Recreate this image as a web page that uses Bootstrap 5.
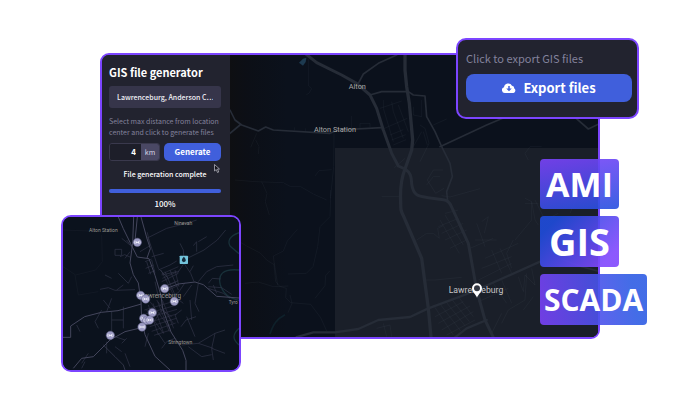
<!DOCTYPE html>
<html lang="en">
<head>
<meta charset="utf-8">
<meta name="viewport" content="width=device-width, initial-scale=1">
<title>GIS file generator</title>
<link rel="stylesheet" href="https://cdn.jsdelivr.net/npm/bootstrap@5.3.0/dist/css/bootstrap.min.css">
<style>
  :root { --edge: #7c45ff; --panel: #22232f; --blue: #405fdc; --muted-ink: #83829c; }
  body { background: #fff; font-family: "Noto Sans CJK SC", "Noto Sans", sans-serif; color: #fff; }
  .stage { padding: 53px 100px 60px; }
  .framed { border: 2px solid var(--edge); border-radius: 9px; background: var(--panel); }
  .map-clip { border-radius: 0 7px 7px 0; overflow: hidden; }
  .side { width: 128px; padding: 10px 9px 8px 7px; background: var(--panel); border-radius: 7px 0 0 7px; }
  .side-title { font-size: 11px; line-height: 15px; }
  .place-input { height: 22px; font-size: 7px; line-height: 12px; font-weight: 500; background: #36354a; color: #f0f0f6; border: 0; border-radius: 3px; margin-top: 6px; }
  .hint { font-size: 7px; line-height: 11px; color: var(--muted-ink); margin: 8px 0 5px; }
  .dist { height: 18px; width: 51px; border: 1px solid #3a394d; border-radius: 3px; overflow: hidden; }
  .dist input { background: #1d1e29; color: #fff; border: 0; font-size: 8px; font-weight: 700; min-width: 0; padding: 0 5px; }
  .dist label { width: 18px; background: #4a4864; color: #d8d7e8; font-size: 7px; }
  .blue-btn { background: var(--blue); color: #fff; font-weight: 700; border: 0; padding: 0; }
  .blue-btn:hover { background: #3652c6; color: #fff; }
  .generate { height: 18px; font-size: 8px; line-height: 12px; border-radius: 5px; }
  .status { font-size: 7px; line-height: 11px; font-weight: 500; margin: 8px 0 9px; }
  .done-bar { height: 4px; background: #36354a; border-radius: 2px; }
  .done-bar .progress-bar { background: var(--blue); }
  .percent { font-size: 8px; line-height: 12px; font-weight: 500; margin-top: 5px; }
  .pointer { right: 10px; top: 109px; width: 6px; height: 9px; }
  .main-map { width: 100%; aspect-ratio: 368 / 282; min-height: 282px; display: block; }
  .export-card { right: -41px; top: -17px; width: 183px; padding: 10px 5px 15px 8px; border-radius: 10px; }
  .export-card p { font-size: 11px; line-height: 16px; color: var(--muted-ink); margin-bottom: 8px; }
  .export-btn { height: 28px; font-size: 13px; line-height: 20px; border-radius: 8px; gap: 7px; }
  .tags { right: -49px; top: 104px; width: 107px; gap: 7px; }
  .tag { font-family: "Open Sans", "Noto Sans", sans-serif; font-weight: 700; border-radius: 4px; height: 51px; width: 79px; }
  .tag-ami { height: 50px; font-size: 34px; background: linear-gradient(170deg, #7b43fae6, #2650dfe6); }
  .tag-gis { font-size: 38px; background: linear-gradient(135deg, #1f4cdde6 15%, #8047fde6 85%); }
  .tag-scada { width: 107px; font-size: 30px; background: linear-gradient(80deg, #7a41f7e6, #2f5de4e6 85%); }
  .inset { left: -41px; bottom: -35px; width: 180px; border-radius: 10px; overflow: hidden; background: #0c111d; }
  .inset svg { display: block; width: 100%; }
  svg text { font-family: Roboto, "Noto Sans", sans-serif; }
</style>
<script src="https://cdn.jsdelivr.net/npm/bootstrap@5.3.0/dist/js/bootstrap.bundle.min.js"></script>
</head>
<body>
<main class="stage">
  <section class="framed position-relative d-flex">
    <form class="side flex-shrink-0 position-relative d-flex flex-column" onsubmit="return false">
      <h1 class="side-title fw-bold mb-0">GIS file generator</h1>
      <input class="place-input w-100 text-center px-2" type="text" aria-label="Location" value="Lawrenceburg, Anderson C…">
      <p class="hint text-nowrap">Select max distance from location<br>center and click to generate files</p>
      <div class="d-flex justify-content-between gap-1">
        <div class="dist d-flex flex-shrink-0">
          <input id="distance" class="flex-fill w-50 text-end" type="text" inputmode="numeric" value="4">
          <label for="distance" class="d-flex align-items-center justify-content-center">km</label>
        </div>
        <button class="btn blue-btn generate flex-fill" type="submit">Generate</button>
      </div>
      <p class="status text-center">File generation complete</p>
      <div class="progress done-bar" role="progressbar" aria-label="File generation" aria-valuenow="100" aria-valuemin="0" aria-valuemax="100">
        <div class="progress-bar w-100"></div>
      </div>
      <div class="percent text-center">100%</div>
      <svg class="pointer position-absolute" viewBox="0 0 12 18" aria-hidden="true"><path d="M1 1v13l3.500-3 2.500 6 2.500-1-2.500-6H11z" fill="#15151c" stroke="#b9b9c4" stroke-width="1.500"/></svg>
    </form>

    <div class="map-clip flex-fill">
      <svg class="main-map" viewBox="15 15 1104 846" preserveAspectRatio="xMidYMid slice" role="img" aria-label="Map of Lawrenceburg area">
        <defs>
          <linearGradient id="fade"><stop offset="0" stop-color="#0e0f12"/><stop offset=".3" stop-color="#0c0f16"/><stop offset="1" stop-color="#0b111c"/></linearGradient>
        </defs>
        <rect x="-400" y="-400" width="2000" height="1700" fill="#0b111c"/>
        <rect x="15" y="-400" width="170" height="1700" fill="url(#fade)"/>
        <rect x="330" y="294" width="1300" height="1000" fill="#1a1f29"/>
        <path d="M222 38l12-12 10-3-2 13-8 11z" fill="#1d3a50"/>
        <g fill="none" stroke="#7d8799" stroke-opacity=".09" stroke-width="2.500">
          <path d="M251 28v80l9 8-8 14-8 4M208 232v10M242 235v12M380 198v40M405 238v-18h30v12M327 250l-1 100-9 90-2 60-30 30-7 60-14 60-20 20-55 2M316 420v25M95 250l-18 42M92 270l10 20-2 22M270 378l12-16 38-3M30 390l60 5 85 3 22 12h30l38 22 40 18M110 395l16 35-5 25 12 40M15 558l50 30 42 22 18 20 22 14 5 50 12 15 20 6-2 28 15 15 60 5 30 40 18 40M217 538l-30 35-12 30-30 15 3 25M270 745l30-38 2-30 12-14M60 700l40-4 45 14 45-2M148 640l10 66M195 735l6 25-12 28"/>
          <path d="M465 175l65-22M500 155l5 30 30 80M467 240l80-35M475 150v25l30 100M495 255l40-16M500 270l42-16M505 285l38-16M520 165l30 80M565 170v25l25 5v-50M585 225l15 10 12 45-12 25-15 30M595 245l12 40M565 290l25-45M625 225l40-18M470 440h55M540 325l-32 28M655 360l-30 0-18 30 25 40 25-15"/>
          <path d="M575 570l30-20h20l18 15-5-30 16-8M600 690h30l80-8M950 290h-35l-15 20 10 20M650 437l25 4 90-25M645 380l-20 0-20 25M900 445l20 10 10 55 10 15M900 460h40M660 490l40-10M645 510l58 100M660 495l55 90M640 530l60-25M650 550l65-30M660 570l65-30M675 595l50-25M770 515l20-15-12 50M755 520l25 70M750 570h65M735 595l70-30M780 625l100-45M770 655l90-35M800 600l30 70M825 595l35 75M865 570l-20 40 15 45M760 690l100-50M870 570l50-60v-55M880 680l15 45 5-50 30 30-10-50M805 700l40 60M830 690l30 70M760 755l90-40M830 820l20-40 50-30 5-80M895 780l30-40"/>
          <path d="M625 765l60 90M642 758l65 85M660 752l60 75M678 745l55 70M700 740l45 60M630 800l85-45M640 820l95-52M650 840l95-55M665 855l85-45M800 850l30-60M455 835l40-10 5 35M475 820l10 40"/>
          <path d="M930 450l30 60 40-20M960 700l50 40 70-20M1060 430l-25 60"/>
        </g>
        <path d="M135 852c10-30 20-45 45-58" fill="none" stroke="#12303a" stroke-opacity=".5" stroke-width="5"/>
        <g fill="none" stroke="#262c37" stroke-linejoin="round" stroke-linecap="round">
          <path stroke-width="5" d="M515 15l-55 25-45 32-15 28M435 135l35-10h80l15 10 35 3 5 62 25 45 20 45 25 50 7 40-17 45 3 30M645 290l140-65 75-32M15 180l15 30 20 15 50 18 22-12 23 9 170 10 25-10 130-7M15 250l30-25M1050 202l40 35 35-17M1125 665l-55-15-60-22"/>
          <path stroke-width="7" d="M215 861l50-14h65l70-10 60-27 95-9 55-26 95-35 50-20 190-85M690 862l35-27 60-25"/>
          <path stroke-width="9" d="M240 10l35 28 75 37 45 25 40 35 20 40 20 65 25 70 20 38 20 9c15 10 19 20 20 45 5 35 20 38 50 41l45 6q17 2 24 20l51 111 25 140 25 90 25 52"/>
          <path stroke-width="10" d="M540 10v50l5 50 8 50 10 110-3 30-20 57c-12 30-15 60-13 100 0 20 0 25 8 40l55 128 20 150 8 86"/>
        </g>
        <g fill="#aaa9a8" text-anchor="middle" font-size="22">
          <text x="397" y="117">Alton</text>
          <text x="330" y="246">Alton Station</text>
          <text x="753" y="728" font-size="26" fill="#c5c5c6">Lawrenceburg</text>
        </g>
        <path d="M756 743c-4-10-15-18-15-28a15 15 0 1 1 30 0c0 10-11 18-15 28z" fill="#fff"/>
        <circle cx="756" cy="715" r="9" fill="#343842"/>
      </svg>
    </div>

    <aside class="framed export-card position-absolute">
      <p class="text-nowrap">Click to export GIS files</p>
      <button class="btn blue-btn export-btn w-100 d-flex align-items-center justify-content-center" type="button">
        <svg width="14" height="10" viewBox="0 0 28 20" aria-hidden="true"><path d="M6 20a6 6 0 0 1-2-11.700A8.500 8.500 0 0 1 20 5.600 5 5 0 0 1 24.500 11 5 5 0 0 1 23 20z" fill="#fff"/><path d="M12.500 6h3v5h4L14 16.500 8.500 11h4z" fill="#405fdc"/></svg>
        <span>Export files</span>
      </button>
    </aside>

    <div class="tags position-absolute d-flex flex-column align-items-start">
      <div class="tag tag-ami d-flex align-items-center justify-content-center">AMI</div>
      <div class="tag tag-gis d-flex align-items-center justify-content-center">GIS</div>
      <div class="tag tag-scada d-flex align-items-center justify-content-center">SCADA</div>
    </div>

    <div class="framed inset position-absolute">
      <svg viewBox="24 21 528 459" role="img" aria-label="Network map of Lawrenceburg">
        <defs>
          <g id="node"><circle r="12.500" fill="#9d9cc4" stroke="#6b6a92" stroke-width="1.500"/><path d="M-7-5q-3 5 0 10M7-5q3 5 0 10" fill="none" stroke="#f0f0fb" stroke-width="2"/><path d="M-5-4L0-1 5-4V4L0 1-5 4z" fill="#f0f0fb"/></g>
        </defs>
        <rect x="24" y="21" width="528" height="459" fill="#0b121d"/>
        <g fill="none" stroke="#183039" stroke-width="4">
          <path d="M552 68c-28 10-35 25-27 40l27 23"/><path d="M552 180c-50-5-64 15-56 45 10 30 30 40 56 46"/><path d="M552 355c-20 18-20 32 0 50"/>
        </g>
        <g fill="none" stroke="#171c29" stroke-width="2">
          <path d="M24 60l80 3M140 75l2 80-20 25-60 15-38-25M60 195l10 60 60-10"/>
        </g>
        <g fill="none" stroke="#34364a" stroke-width="2">
          <path d="M275 85l60-30 60-15 30-10M255 125l30-18-8-40M290 140l36-10M200 85l25 20M215 90l18 25M225 125l-15 20M180 118h20v18h-20zM195 140l14-6 18 8M150 195l20 10M135 238l25-5 20 8 60-2M190 190l30 30 10-20M185 240l20-15M145 270l20 25M170 265l-15 40M170 305v70M205 290v65M170 330h35M180 380l30 10M140 300l-20 35 10 20M65 345l10 20M155 395v35M180 410l20 15M200 400l15-15M90 455l-10 20M210 430l15 40"/>
          <path d="M280 85l10 30 20 60 30 30M270 155l20-8M272 175l24-10M280 190l20-8M275 155l12 38M290 150l10 40M310 180l35-15 20-12M330 185l30 70M345 180l25 60M320 215l50-25M325 230l45-18M320 195l45-10M300 215l10 45M340 260l30-12 20-30M365 265l20 15M380 300l-20 15 10 25M395 320l25 60M378 350l15-20 30-10"/>
          <path d="M387 150l-2-30-10-20M387 150l60-30 40-30 25-30M430 95l25-15M425 125v-30l-10 12M387 160l-20 30M387 160l20 30 10 25M405 185l10-18M430 215l25-30 30-15 50-5M460 220l12-15 25 2M460 230l40 3 30 20M460 235l45 15 20 15M475 225l10 25M430 220l-10 60 12 25M410 225l-25 35M405 270l5 60M380 405l50-5 45 15M400 410l40 30 30-6M470 415l5 35M480 370l-10 45 40 15M360 385l-25 10-15 20M430 400l50-30 30-10M100 430l-20 30M280 370l-10 40M310 370l20 30"/>
        </g>
        <g fill="none" stroke="#3b3b51" stroke-width="1.500">
          <path d="M268 300l85-25M272 312l90-26M276 324l90-26M280 338l85-26M284 350l80-25M290 364l72-25M297 376l50-16M280 285l30 90M294 280l32 90M308 275l35 90M322 270l34 85M300 330l20-30 30 20M285 275l60 80M275 300l50 70M305 270l50 70"/>
          <path d="M318 180l40 80M320 192l50-22M322 205l50-22M330 245l42-20M312 235l50-18M360 180l12 50"/>
        </g>
        <g fill="none" stroke="#44465c" stroke-width="3" stroke-linejoin="round">
          <path d="M236 21l-3 78-8 60 10 35 15 25 8 55 2 55 10 45 30 65 45 41"/>
          <path d="M190 21l15 35 22 45 20 40 35 5 18 50 18 60 5 40 25 70 35 55 10 30v30"/>
          <path d="M247 21l-8 80M258 21l18 65 10 30-10 28"/>
          <path d="M24 382h23v-34l42-28 50-13 50-5 70-20M55 475l25-30 35-5 50-50 45-25 50-12"/>
          <path d="M330 237l40-15 50-6 25 8 40 35 67 5"/>
          <path d="M145 405l35 35 25 25 5 15" stroke-width="2"/>
        </g>
        <g fill="#9b9792" text-anchor="middle" font-size="15">
          <text x="145" y="65">Alton Station</text>
          <text x="385" y="44">Ninevah</text>
          <text x="376" y="401">Stringtown</text>
          <text x="521" y="282" text-anchor="start" font-size="14">Tyro</text>
          <text x="318" y="263" font-size="19">Lawrenceburg</text>
        </g>
        <rect x="374" y="137" width="25" height="25" rx="2" fill="#73c4dc"/>
        <path d="M386.500 140q8 8 5 14-5 5-10 0-3-6 5-14z" fill="#152b3b"/>
        <use href="#node" x="247" y="97"/><use href="#node" x="329" y="236"/><use href="#node" x="257" y="256"/><use href="#node" x="272" y="267"/><use href="#node" x="358" y="274"/><use href="#node" x="292" y="308"/><use href="#node" x="266" y="325"/><use href="#node" x="275" y="331"/><use href="#node" x="284" y="330"/><use href="#node" x="261" y="351"/><use href="#node" x="166" y="376"/>
      </svg>
    </div>
  </section>
</main>
</body>
</html>
